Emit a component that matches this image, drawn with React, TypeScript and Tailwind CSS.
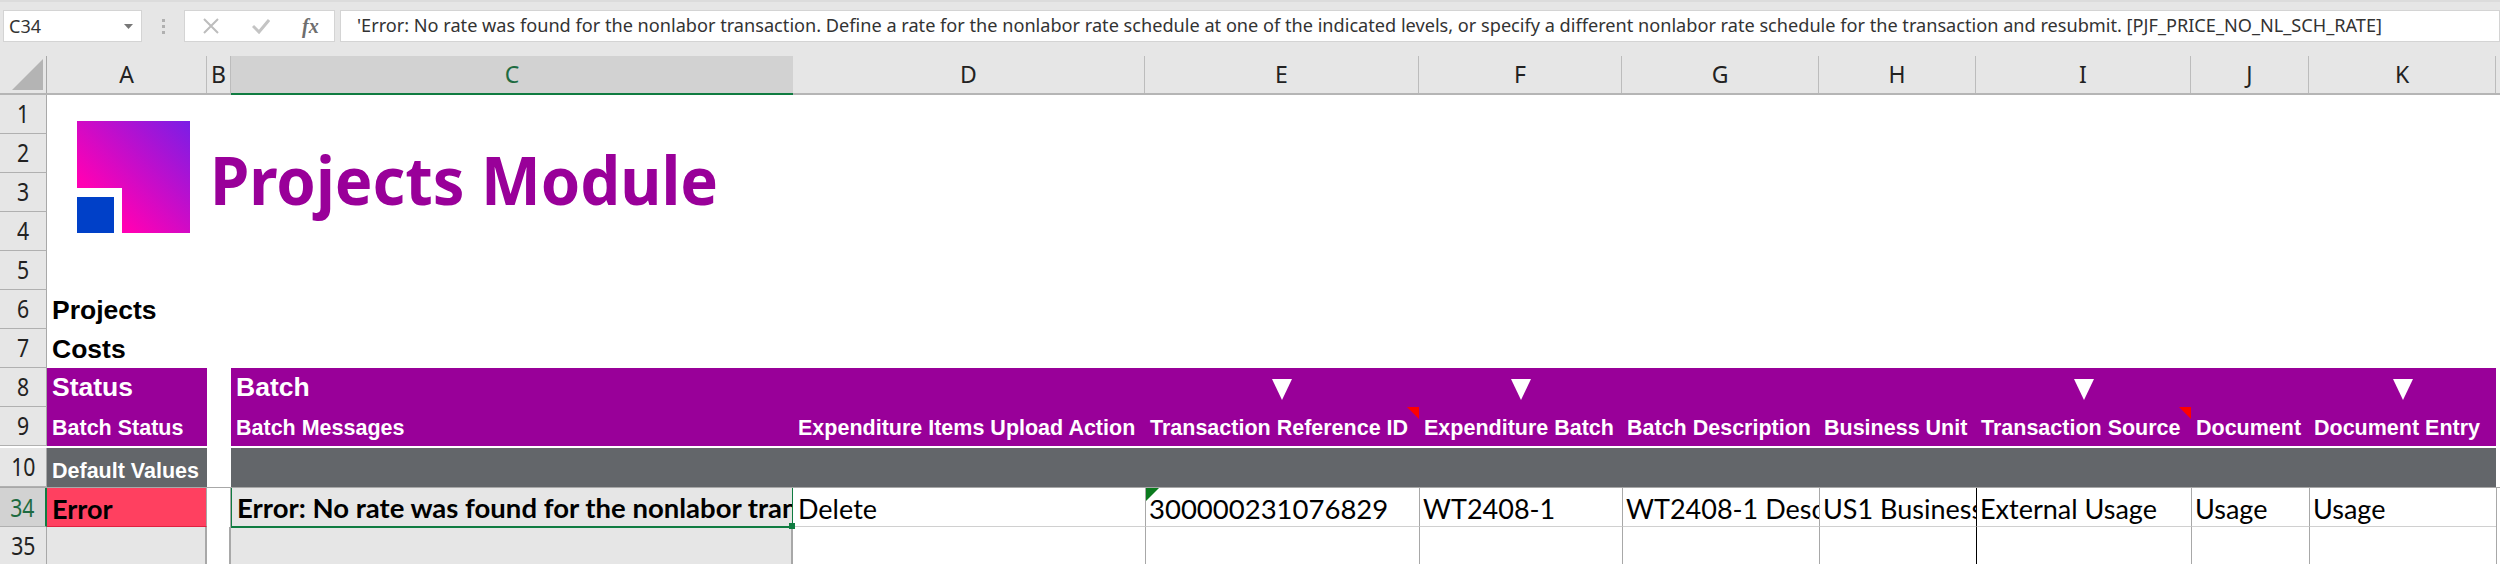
const cols = 'grid grid-cols-[47px_160px_24px_562px_352px_274px_203px_197px_157px_215px_118px_187px_4px]';
const arial = "font-['Liberation_Sans',Arial,sans-serif]";
const calibri = "font-['Lato',sans-serif]";
const segoe = "font-['Noto_Sans',sans-serif]";

const letters = ['A', 'B', 'C', 'D', 'E', 'F', 'G', 'H', 'I', 'J', 'K'];

function Triangle() {
  return (
    <svg width="20" height="21" viewBox="0 0 20 21" className="mt-[4px]">
      <polygon points="0,0 20,0 10,21" fill="#ffffff" />
    </svg>
  );
}

function RowNum({ n, active }: { n: number; active?: boolean }) {
  return (
    <div
      className={
        active
          ? `flex items-center justify-center border-b border-b-[#b0b0b0] border-r-2 border-r-[#107c41] bg-[#d2d2d2] text-[#1e6b41] text-[25px] ${segoe}`
          : `flex items-center justify-center border-b border-b-[#b0b0b0] border-r border-r-[#a8a8a8] bg-[#e6e6e6] text-[#222] text-[25px] ${segoe}`
      }
    >
      <span className="scale-x-[0.85]">{n}</span>
    </div>
  );
}

function BlankRow({ n }: { n: number }) {
  return (
    <div className={`${cols} h-[39px]`}>
      <RowNum n={n} />
    </div>
  );
}

function Toolbar() {
  return (
    <div className="flex h-[56px] items-start gap-[5px] border-t-2 border-t-[#dcdcdc] bg-[#e6e6e6] pl-[3px] pt-[8px]">
      <div className={`flex h-[32px] w-[139px] items-center justify-between border border-[#d4d4d4] bg-white pl-[5px] pr-[8px] text-[18px] text-[#333] ${segoe}`}>
        <span>C34</span>
        <svg width="9" height="5" viewBox="0 0 9 5"><polygon points="0,0 9,0 4.5,5" fill="#777" /></svg>
      </div>
      <div className="flex h-[32px] w-[32px] flex-col items-center justify-center gap-[3px]">
        <span className="h-[3px] w-[3px] bg-[#b0b0b0]" />
        <span className="h-[3px] w-[3px] bg-[#b0b0b0]" />
        <span className="h-[3px] w-[3px] bg-[#b0b0b0]" />
      </div>
      <div className="flex h-[32px] w-[151px] items-center border border-[#d4d4d4] bg-white">
        <svg width="16" height="16" viewBox="0 0 16 16" className="ml-[18px]">
          <path d="M1 1 L15 15 M15 1 L1 15" stroke="#bdbdbd" strokeWidth="2" fill="none" />
        </svg>
        <svg width="18" height="16" viewBox="0 0 18 16" className="ml-[33px]">
          <path d="M1 8 L7 14 L17 2" stroke="#c4c4c4" strokeWidth="3" fill="none" />
        </svg>
        <span className="ml-[32px] font-['Liberation_Serif',serif] text-[20px] font-bold italic text-[#6e6e6e]">fx</span>
      </div>
      <div className={`flex h-[32px] flex-1 items-center whitespace-nowrap border border-[#d4d4d4] bg-white pl-[16px] text-[18.15px] text-[#333] ${segoe}`}>
        'Error: No rate was found for the nonlabor transaction. Define a rate for the nonlabor rate schedule at one of the indicated levels, or specify a different nonlabor rate schedule for the transaction and resubmit. [PJF_PRICE_NO_NL_SCH_RATE]
      </div>
    </div>
  );
}

function ColumnHeaders() {
  return (
    <div className={`${cols} h-[39px] bg-[#e6e6e6] border-b-2 border-b-[#b5b5b5]`}>
      <div className="flex items-end justify-end border-r border-r-[#a8a8a8] pb-[3px] pr-[3px]">
        <svg width="31" height="31" viewBox="0 0 31 31"><polygon points="0,31 31,31 31,0" fill="#b4b4b4" /></svg>
      </div>
      {letters.map((l) => (
        <div
          key={l}
          className={
            l === 'C'
              ? `-mb-[2px] flex items-center justify-center border-b-2 border-b-[#107c41] bg-[#d2d2d2] text-[23px] text-[#1e6b41] ${segoe}`
              : `flex items-center justify-center border-r border-r-[#bcbcbc] text-[23px] text-[#222] ${segoe}`
          }
        >
          {l}
        </div>
      ))}
    </div>
  );
}

const head = `flex items-center overflow-hidden whitespace-nowrap bg-[#990099] px-[5px] leading-none text-white ${arial} font-bold`;
const sub = `${head} pt-[5px] text-[21.5px]`;
const cell = 'flex items-center overflow-hidden whitespace-nowrap border-b border-b-[#d0d0d0] border-l px-[3px] pt-[3px]';

export default function App() {
  return (
    <div className="h-[564px] w-[2500px] overflow-hidden bg-white">
      <Toolbar />
      <ColumnHeaders />
      <div className="relative">
        {/* floating logo image over the sheet */}
        <div className="absolute left-[77px] top-[26px] flex items-center gap-[20px]">
          <div className="relative h-[112px] w-[113px] bg-[linear-gradient(45deg,#ff00b4_25%,#7a1ee6_100%)]">
            <div className="absolute bottom-0 left-0 h-[45px] w-[45px] bg-white" />
            <div className="absolute bottom-0 left-0 h-[36px] w-[37px] bg-[#0040c8]" />
          </div>
          <span className={`${segoe} origin-left scale-x-[0.945] pt-[4px] text-[67px] font-bold text-[#990099]`}>Projects Module</span>
        </div>

        {[1, 2, 3, 4, 5].map((n) => (
          <BlankRow key={n} n={n} />
        ))}
        <div className={`${cols} h-[39px]`}>
          <RowNum n={6} />
          <div className={`flex items-center whitespace-nowrap px-[5px] pt-[1px] text-[26.5px] font-bold leading-none text-black ${arial}`}>Projects</div>
        </div>
        <div className={`${cols} h-[39px]`}>
          <RowNum n={7} />
          <div className={`flex items-center whitespace-nowrap px-[5px] pt-[1px] text-[26.5px] font-bold leading-none text-black ${arial}`}>Costs</div>
        </div>

        <div className={`${cols} h-[39px]`}>
          <RowNum n={8} />
          <div className={`${head} text-[26.5px]`}>Status</div>
          <div />
          <div className={`${head} text-[26.5px]`}>Batch</div>
          <div className="bg-[#990099]" />
          <div className="flex justify-center bg-[#990099] pt-[7px]"><Triangle /></div>
          <div className="flex justify-center bg-[#990099] pt-[7px]"><Triangle /></div>
          <div className="bg-[#990099]" />
          <div className="bg-[#990099]" />
          <div className="flex justify-center bg-[#990099] pt-[7px]"><Triangle /></div>
          <div className="bg-[#990099]" />
          <div className="flex justify-center bg-[#990099] pt-[7px]"><Triangle /></div>
        </div>

        <div className={`${cols} h-[41px] border-b-[3px] border-b-white`}>
          <RowNum n={9} />
          <div className={sub}>Batch Status</div>
          <div />
          <div className={sub}>Batch Messages</div>
          <div className={sub}>Expenditure Items Upload Action</div>
          <div className={`${sub} relative`}>
            Transaction Reference ID
            <svg width="12" height="12" viewBox="0 0 12 12" className="absolute right-0 top-0"><polygon points="0,0 12,0 12,12" fill="#ff0000" /></svg>
          </div>
          <div className={sub}>Expenditure Batch</div>
          <div className={sub}>Batch Description</div>
          <div className={sub}>Business Unit</div>
          <div className={`${sub} relative`}>
            Transaction Source
            <svg width="12" height="12" viewBox="0 0 12 12" className="absolute right-0 top-0"><polygon points="0,0 12,0 12,12" fill="#ff0000" /></svg>
          </div>
          <div className={sub}>Document</div>
          <div className={sub}>Document Entry</div>
        </div>

        <div className={`${cols} h-[40px] border-b border-b-[#a8a8a8]`}>
          <RowNum n={10} />
          <div className={`flex items-center overflow-hidden whitespace-nowrap bg-[#63666a] px-[5px] pt-[9px] text-[21.5px] font-bold leading-none text-white ${arial}`}>Default Values</div>
          <div />
          <div className="col-span-9 bg-[#63666a]" />
        </div>

        <div className={`${cols} h-[39px] text-[27px] leading-none text-black ${calibri}`}>
          <RowNum n={34} active />
          <div className="flex items-center border-b border-b-[#e02040] border-r border-r-[#a8a8a8] bg-[#ff4060] px-[5px] pt-[2px] font-bold">Error</div>
          <div className="border-r border-r-[#a8a8a8]" />
          <div className="relative z-10 -mb-[1px] flex items-center overflow-hidden whitespace-nowrap border-b-2 border-l border-r border-b-[#107c41] border-l-[#107c41] border-r-[#107c41] bg-[#e6e6e6] px-[5px] pt-[2px] text-[27.5px] font-bold">
            Error: No rate was found for the nonlabor transaction. Define a rate
          </div>
          <div className="flex items-center border-b border-b-[#d0d0d0] px-[5px] pt-[3px]">Delete</div>
          <div className={`${cell} relative border-l-[#a8a8a8]`}>
            <span className="text-[27.5px]">300000231076829</span>
            <svg width="13" height="13" viewBox="0 0 13 13" className="absolute left-0 top-0"><polygon points="0,0 13,0 0,13" fill="#0b7a1e" /></svg>
          </div>
          <div className={`${cell} border-l-[#a8a8a8]`}>WT2408-1</div>
          <div className={`${cell} border-l-[#a8a8a8]`}>WT2408-1 Description</div>
          <div className={`${cell} border-l-[#a8a8a8]`}>US1 Business Unit</div>
          <div className={`${cell} border-l-black`}>External Usage</div>
          <div className={`${cell} border-l-[#a8a8a8]`}>Usage</div>
          <div className={`${cell} border-l-[#a8a8a8]`}>Usage</div>
          <div className="border-l border-l-[#a8a8a8]" />
        </div>

        <div className={`${cols} h-[39px]`}>
          <RowNum n={35} />
          <div className="border-r-2 border-r-[#a8a8a8] bg-[#e6e6e6]" />
          <div className="border-r-2 border-r-[#a8a8a8]" />
          <div className="border-r-2 border-r-[#a8a8a8] bg-[#e6e6e6]" />
          <div />
          <div className="border-l border-l-[#a8a8a8]" />
          <div className="border-l border-l-[#a8a8a8]" />
          <div className="border-l border-l-[#a8a8a8]" />
          <div className="border-l border-l-[#a8a8a8]" />
          <div className="border-l border-l-black" />
          <div className="border-l border-l-[#a8a8a8]" />
          <div className="border-l border-l-[#a8a8a8]" />
          <div className="border-l border-l-[#a8a8a8]" />
        </div>

        {/* selection handle */}
        <div className="absolute left-[789px] top-[428px] z-20 h-[6px] w-[6px] bg-[#107c41]" />
      </div>
    </div>
  );
}
